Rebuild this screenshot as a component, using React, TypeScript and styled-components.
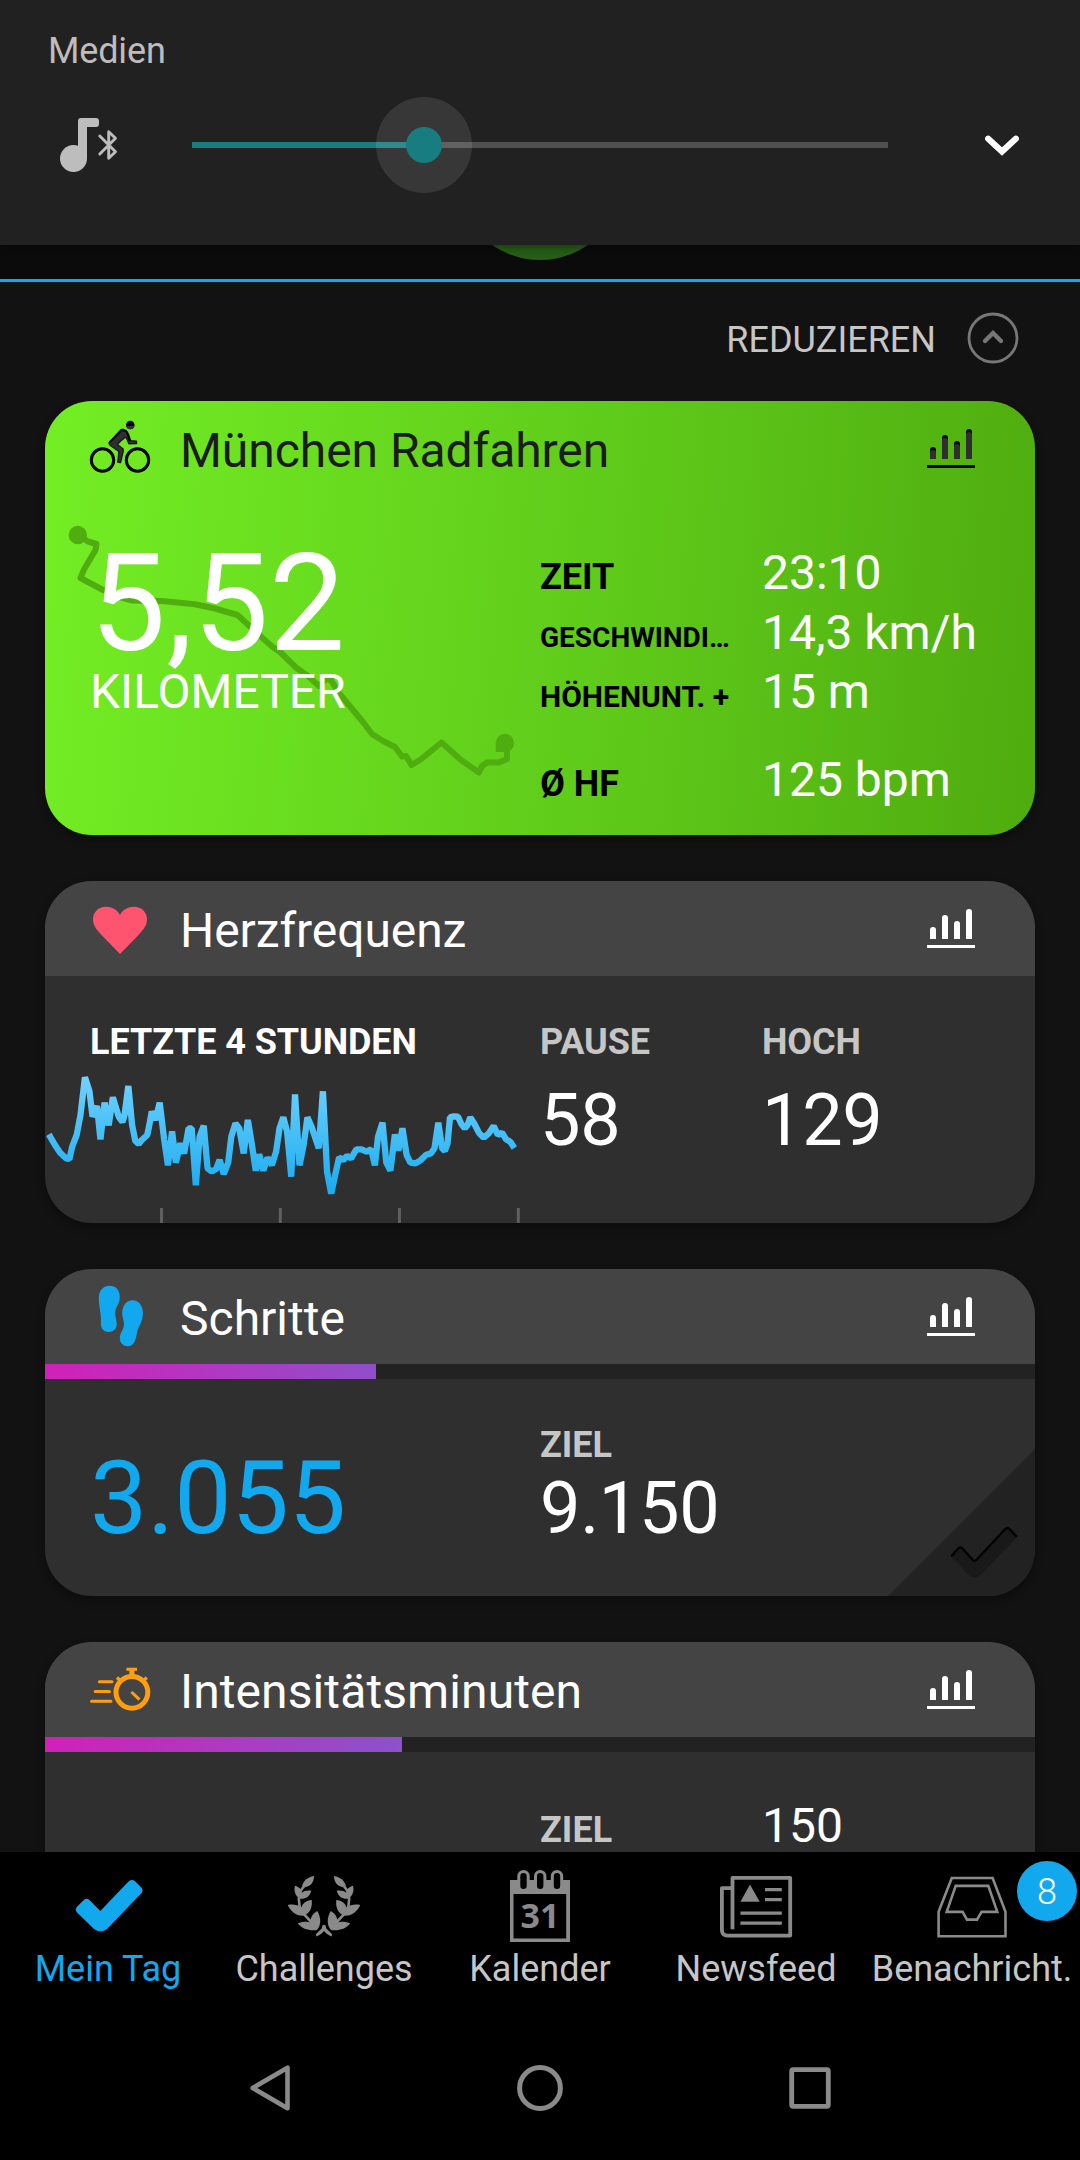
import React from "react";
import styled, { createGlobalStyle, css } from "styled-components";

const BLUE = "#12a8ee";
const GREY = "#8a8a8a";
const LABEL = "#c6c6c6";

const GlobalStyle = createGlobalStyle`
  * { box-sizing: border-box; }
  body { margin: 0; background: #000; }
`;

const Screen = styled.div`
  width: 1080px;
  height: 2160px;
  display: flex;
  flex-direction: column;
  overflow: hidden;
  background: #121212;
  color: #fff;
  font-family: Roboto, "Noto Sans", sans-serif;
  svg { display: block; flex: none; overflow: visible; }
`;

/* ---------- volume panel ---------- */

const VolumePanel = styled.section`
  position: relative;
  z-index: 1;
  flex: none;
  height: 245px;
  padding: 30px 60px 0 48px;
  background: #212121;
  box-shadow: 0 2px 8px rgba(0, 0, 0, 0.4);
`;

const VolumeTitle = styled.div`
  font-size: 36px;
  line-height: 42px;
  letter-spacing: -0.15px;
  color: #bdbdbd;
`;

const VolumeRow = styled.div`
  display: flex;
  align-items: center;
  height: 96px;
  margin-top: 25px;
  padding-left: 12px;
`;

const Slider = styled.div`
  display: flex;
  align-items: center;
  width: 696px;
  height: 96px;
  margin: 0 97px 0 75px;
`;

const Track = styled.div`
  position: relative;
  width: 100%;
  height: 6px;
  background: #505050;
`;

const TrackFill = styled.div`
  height: 6px;
  background: #177d80;
`;

const Halo = styled.div`
  position: absolute;
  top: 50%;
  width: 96px;
  height: 96px;
  transform: translate(-50%, -50%);
  display: grid;
  place-items: center;
  border-radius: 50%;
  background: rgba(255, 255, 255, 0.1);
`;

const Thumb = styled.div`
  width: 36px;
  height: 36px;
  border-radius: 50%;
  background: #177d80;
`;

/* ---------- list ---------- */

const Strip = styled.div`
  position: relative;
  flex: none;
  height: 37px;
  overflow: hidden;
  background: #0b0b0b;
  border-bottom: 3px solid ${BLUE};
`;

const Avatar = styled.div`
  position: absolute;
  left: 50%;
  bottom: 19px;
  width: 167px;
  height: 167px;
  transform: translateX(-50%);
  border-radius: 50%;
  background: #275d17;
`;

const Collapse = styled.div`
  flex: none;
  display: flex;
  justify-content: flex-end;
  align-items: center;
  gap: 31px;
  height: 119px;
  padding: 0 61px 8px 0;
  font-size: 36px;
  line-height: 42px;
  color: ${LABEL};
`;

const CollapseLabel = styled.span`
  padding-top: 4px;
`;

const Feed = styled.main`
  flex: none;
  display: flex;
  flex-direction: column;
  gap: 46px;
  height: 1451px;
  padding: 0 45px;
  overflow: hidden;
`;

const Card = styled.article<{ $height: number; $green?: boolean }>`
  position: relative;
  flex: none;
  height: ${(p) => p.$height}px;
  overflow: hidden;
  border-radius: 47px;
  background: ${(p) =>
    p.$green ? "linear-gradient(95deg, #73ee24 0%, #61ce1b 51%, #4fac0f 100%)" : "#2f2f2f"};
`;

const Shadow = styled.div`
  flex: none;
  border-radius: 47px;
  box-shadow: 0 4px 9px rgba(0, 0, 0, 0.35);
`;

const CardHeader = styled.header<{ $plain?: boolean }>`
  display: flex;
  align-items: center;
  height: 95px;
  padding: 0 60px 1px 45px;
  background: ${(p) => (p.$plain ? "transparent" : "#444")};
`;

const CardTitle = styled.h2<{ $dark?: boolean; $spacing?: number }>`
  flex: 1;
  margin: 0;
  padding: 5px 0 0 30px;
  font-size: 48px;
  font-weight: 400;
  line-height: 56px;
  letter-spacing: ${(p) => p.$spacing ?? 0}px;
  color: ${(p) => (p.$dark ? "#1c1c1c" : "#fff")};
`;

const Body = styled.div<{ $top: number }>`
  position: relative;
  display: grid;
  grid-template-columns: 450px 222px 1fr;
  padding: ${(p) => p.$top}px 0 0 45px;
`;

const DistanceBody = styled(Body)`
  grid-template-columns: 450px 1fr;
`;

const Distance = styled.div`
  padding-top: 1px;
  font-size: 135px;
  line-height: 120px;
  letter-spacing: 0.3px;
`;

const Unit = styled.div`
  font-size: 48px;
  line-height: 56px;
`;

const StatRow = styled.div<{ $gap?: number }>`
  display: grid;
  grid-template-columns: 222px 1fr;
  align-items: end;
  height: 60px;
  margin-top: ${(p) => p.$gap ?? 0}px;
`;

const StatLabel = styled.div<{ $size?: number; $line?: number; $muted?: boolean }>`
  font-size: ${(p) => p.$size ?? 36}px;
  line-height: ${(p) => p.$line ?? 52}px;
  font-weight: 700;
  white-space: nowrap;
  color: ${(p) => (p.$muted ? LABEL : "#000")};
`;

const StatValue = styled.div`
  font-size: 48px;
  line-height: 60px;
  white-space: nowrap;
`;

const Caption = styled.div<{ $bright?: boolean }>`
  font-size: 36px;
  font-weight: 700;
  line-height: 42px;
  letter-spacing: -0.07px;
  white-space: nowrap;
  color: ${(p) => (p.$bright ? "#fff" : LABEL)};
`;

const BigValue = styled.div<{ $gap?: number }>`
  margin-top: ${(p) => p.$gap ?? 0}px;
  font-size: 72px;
  line-height: 84px;
  letter-spacing: -0.3px;
`;

const StepCount = styled.div`
  padding-top: 14px;
  font-size: 102px;
  line-height: 120px;
  color: ${BLUE};
`;

const Progress = styled.div`
  height: 15px;
  background: #222;
`;

const ProgressFill = styled.div`
  height: 15px;
  background: linear-gradient(90deg, #d120b8, #11aaee) 0 0 / 990px 15px no-repeat;
`;

const overlay = css`
  position: absolute;
  pointer-events: none;
`;

const RouteSvg = styled.svg`
  ${overlay}
  left: 0;
  top: 0;
`;

const PulseSvg = styled.svg`
  ${overlay}
  left: 0;
  bottom: 0;
`;

const GoalCorner = styled.svg`
  ${overlay}
  right: 0;
  bottom: 0;
`;

/* ---------- bottom bars ---------- */

const TabBar = styled.nav`
  flex: none;
  display: grid;
  grid-template-columns: repeat(5, 216px);
  height: 164px;
  background: #000;
`;

const Tab = styled.div<{ $active?: boolean }>`
  position: relative;
  display: flex;
  flex-direction: column;
  align-items: center;
  gap: 6px;
  padding-top: 18px;
  font-size: 36px;
  line-height: 42px;
  white-space: nowrap;
  color: ${(p) => (p.$active ? BLUE : LABEL)};
`;

const Badge = styled.span`
  position: absolute;
  top: 9px;
  right: 3px;
  width: 60px;
  height: 60px;
  border-radius: 50%;
  background: ${BLUE};
  color: #fff;
  font-size: 36px;
  font-weight: 300;
  line-height: 62px;
  text-align: center;
`;

const SystemBar = styled.div`
  flex: none;
  display: grid;
  grid-template-columns: repeat(3, 270px);
  justify-content: center;
  justify-items: center;
  align-items: center;
  height: 144px;
  background: #000;
`;

/* ---------- icons ---------- */

const MusicBluetooth = () => (
  <svg width="57" height="54" viewBox="60 118 57 54">
    <circle cx="73.5" cy="158.5" r="13.5" fill="#bdbdbd" />
    <path d="M78 158V121a3 3 0 0 1 3-3H96a3 3 0 0 1 3 3v3a3 3 0 0 1-3 3H87v31.500Z" fill="#bdbdbd" />
    <path
      d="M99.800 136 115.500 151.700 108.700 158.300V131.700L115.500 138.300 99.800 154"
      fill="none"
      stroke="#bdbdbd"
      strokeWidth="2.900"
      strokeLinecap="round"
      strokeLinejoin="round"
    />
  </svg>
);

const ChevronDown = () => (
  <svg width="34" height="20" viewBox="0 0 34 20">
    <path d="M3.200 3.700 17 16.500 30.800 3.700" fill="none" stroke="#fff" strokeWidth="6.200" strokeLinecap="round" />
  </svg>
);

const CollapseIcon = () => (
  <svg width="52" height="52" viewBox="0 0 52 52">
    <circle cx="26" cy="26" r="24" fill="none" stroke="#777" strokeWidth="2.800" />
    <path d="M18 29 26 21 34 29" fill="none" stroke="#777" strokeWidth="4.400" strokeLinecap="round" />
  </svg>
);

const bars = [
  [3, 18],
  [15, 6],
  [27, 12],
  [39, 0],
];

const BarsIcon = ({ dark }: { dark?: boolean }) => (
  <svg width="48" height="39" viewBox="0 0 48 39">
    {bars.map(([x, y]) => (
      <g key={x}>
        <path d={`M${x} 30V${y + 3}a3 3 0 0 1 6 0V30Z`} fill={dark ? "#000" : "#fff"} />
        {dark && <path d={`M${x} 30V${y + 6}a3 3 0 0 1 6 0V30Z`} fill="#2f2f2f" />}
      </g>
    ))}
    <rect y="36" width="48" height="3" fill={dark ? "#000" : "#fff"} />
  </svg>
);

const BikeIcon = () => (
  <svg width="60" height="60" viewBox="0 0 60 60">
    <g fill="none" stroke="#000" strokeWidth="3">
      <circle cx="12.500" cy="42" r="11.200" />
      <circle cx="47.500" cy="42" r="11.200" />
    </g>
    <circle cx="40.300" cy="7" r="4.300" fill="#000" />
    <path d="M36.200 8a4.200 4.200 0 0 0 8.200 0Z" fill="#333" />
    <path
      d="M33.300 11.300 35.700 12.300 38.300 15.700 40.700 22.700 46.500 23.100V25.600L38.900 25.700 36.300 19.600 35 19.500 30.700 23 27.300 26.500 33 30.700 33.300 33 30.500 44.600 27.800 44 28.900 33.500 20 27.300 18.900 25 30.900 11.800Z"
      fill="#2f2f2f"
      stroke="#1a1a1a"
      strokeWidth="1.400"
      strokeLinejoin="round"
    />
    <path d="M19.500 24.500 32 11.800 36.500 13.500 40 23" fill="none" stroke="#000" strokeWidth="1.800" strokeLinejoin="round" />
  </svg>
);

const HeartIcon = () => (
  <svg width="60" height="60" viewBox="0 0 60 60">
    <path
      d="M30 56 11.500 37C6 31 3 27 3 21.500 3 14 8.500 8.800 16 8.800 22 8.800 27 11.500 30 17 33 11.500 38 8.800 44 8.800 51.500 8.800 57 14 57 21.500 57 27 54 31 48.500 37Z"
      fill="#ff5470"
    />
  </svg>
);

const FeetIcon = () => (
  <svg width="60" height="60" viewBox="0 0 60 60" fill={BLUE}>
    <path d="M19.500-.300C26-.300 29.800 4.300 29.800 10.500 29.800 19 25.200 20 25.200 27.500 25.200 32 26.700 33 26.700 38 26.700 42.800 23.300 46 18.800 46 14.200 46 10.900 42.800 10.900 38.500V33C10.900 26 8.800 20.500 8.800 12 8.800 5 13-.300 19.500-.300Z" />
    <path d="M42.600 14.200C48.500 14.200 52.900 19.500 52.900 27 52.900 35.500 48.300 40.500 47 46.500 45.600 54.500 44 60.200 37.800 60.200 33.500 60.200 29.800 57 29.800 52.500 29.800 46 34 44.500 34 38 34 34 32.200 32 32.200 27 32.200 19.500 36.500 14.200 42.600 14.200Z" />
  </svg>
);

const StopwatchIcon = () => (
  <svg width="60" height="60" viewBox="0 0 60 60" fill="none" stroke="#ff9e0f">
    <circle cx="41.900" cy="33.300" r="15.900" strokeWidth="5" />
    <path d="M36.400 10.300H47" strokeWidth="2.900" />
    <path d="M41.900 10V17" strokeWidth="5" />
    <path d="M27 18.500 31 22.500M56.800 18.500 52.800 22.500" strokeWidth="3.200" />
    <path d="M41.500 33 49.500 40.700" strokeWidth="3" />
    <path d="M9.300 22.700H22M5.200 32.400H19.500M1.500 42.300H21" strokeWidth="3" strokeLinecap="round" />
  </svg>
);

const CheckIcon = () => (
  <svg width="72" height="72" viewBox="0 0 72 72">
    <path
      d="M5 42.500Q2.500 39.500 5 36.700L12 29.700Q14.500 27.700 17 29.500L28.300 41 56.500 11.400Q60 8.500 63.300 11.400L69.300 17.400Q71.800 20.300 69.300 23.300L35 59Q28.500 63.500 22 59Z"
      fill={BLUE}
    />
  </svg>
);

const laurelHalf = (
  <>
    <path d="M26 6C20 7.500 15.500 10 14.300 15.500L16 17.500C21.500 16.500 26 13.500 26 6Z" />
    <path d="M7 15.700C11.500 17 13.500 19.500 13.800 22.800 16.500 20.500 19.500 20 23.300 20.700 21.500 27 17.500 29.300 11.500 28.700 7 25 5.700 21 7 15.700Z" />
    <path d="M-.300 35C5 34 10 35 13.500 37.200 15 33 18 30.500 23.700 30 24.500 37 22.500 42 17 45.500 8.500 46.500 3.500 42.500-.300 35Z" />
    <path d="M9.700 53.300C14 51.300 19 51.300 22.300 52.300 22.500 47 25 43.500 29.300 41 33.300 48 33.300 55 29 60 22 61 14.500 59.500 9.700 53.300Z" />
    <path d="M16 16 12.500 21 10.800 29 12 40 26 55" fill="none" stroke={GREY} strokeWidth="2.600" />
  </>
);

const LaurelIcon = () => (
  <svg width="72" height="72" viewBox="0 0 72 72" fill={GREY}>
    {laurelHalf}
    <g transform="matrix(-1 0 0 1 72 0)">{laurelHalf}</g>
    <path d="M34.700 55H37.300L38.300 58.500 44 64 43.700 66.500C40.500 65.500 38 63.500 36 61 34 63.500 31.500 65.500 28.300 66.500L28 64 33.700 58.500Z" />
  </svg>
);

const CalendarIcon = () => (
  <svg width="72" height="72" viewBox="0 0 72 72">
    <path d="M6 10H66V72H6ZM9.500 24V68.500H62.200V24Z" fill={GREY} fillRule="evenodd" />
    {[19.5, 36.2, 53].map((x) => (
      <rect key={x} x={x - 4.7} y="1.500" width="9.400" height="19" rx="4.700" fill="#000" stroke={GREY} strokeWidth="3" />
    ))}
    <text
      x="36"
      y="58"
      textAnchor="middle"
      fontFamily="'Open Sans', 'Noto Sans', sans-serif"
      fontSize="34"
      fontWeight="700"
      fill={GREY}
    >
      31
    </text>
  </svg>
);

const NewsIcon = () => (
  <svg width="72" height="72" viewBox="0 0 72 72">
    <path
      d="M12.500 59.300V7.800H70.200V65.600H7.500Q1.900 65.600 1.900 60V18.100H12.500"
      fill="none"
      stroke={GREY}
      strokeWidth="3.800"
      strokeLinejoin="round"
    />
    <path d="M30 14.500 20.400 31.700H39.700Z" fill={GREY} />
    <path d="M45 19.700H61.800M45 29.700H61.800M20.400 43.200H61.800M20.400 53.200H61.800" stroke={GREY} strokeWidth="3.200" />
  </svg>
);

const InboxIcon = () => (
  <svg width="72" height="72" viewBox="0 0 72 72" fill="none" stroke={GREY}>
    <path d="M15.800 8H56.600L69.500 41.700V66.200H2.600V41.700Z" strokeWidth="2.600" />
    <path d="M19.700 15.900H52.300L61.300 41.900H45.600L41 49.600H31L26.600 41.900H10.700Z" strokeWidth="2.600" />
  </svg>
);

const GoalCheck = () => (
  <GoalCorner width="147" height="147" viewBox="888 1449 147 147">
    <path d="M1035 1449V1596H888Z" fill="#222" />
    <path
      d="M951 1556 960 1546.500 974.500 1561 1007.500 1527.500 1017 1537 981 1574.500Q974.500 1580 968 1574.500Z"
      fill="#191919"
    />
    <path
      d="M951.300 1556.300 958.500 1548.300Q960.300 1546.300 962.300 1548.300L972.500 1559.800Q974.500 1561.800 976.500 1559.800L1005.300 1529Q1007.500 1527 1009.500 1529L1016.700 1536.700"
      fill="none"
      stroke="#000"
      strokeWidth="2.200"
    />
  </GoalCorner>
);

const Route = () => (
  <RouteSvg width="990" height="434" viewBox="45 401 990 434">
    <g fill="#50ad10">
      <circle cx="77.800" cy="535" r="9.200" />
      <circle cx="504.900" cy="743" r="9.200" />
      <rect x="495.700" y="743" width="9" height="9" />
    </g>
    <path
      d="M78 535 88 541.500 96.500 544 95.500 550 84 569.500 80.500 578 103 590 118 596.500 132 600.500 162 601 195 604.300 215 608.500 237.500 615 251 627.500 272 646.500 280 652 296 667.500 308 676 319 686 326 679 331 680 338 692 363 722 372 734 383 741 395 747 402 756.500 406 756 411.500 765 420 760 441.500 742.500 461 760 479 772.500 482 766 487 762.500 499 762.500 507 759V743"
      fill="none"
      stroke="#50ad10"
      strokeWidth="6"
      strokeLinejoin="round"
    />
  </RouteSvg>
);

const pulse =
  "142,793 160,825 175,848 192,865 202,867 210,830 223,795 234,735 247,622 260,664 269,740 282,708 292,808 304,698 316,766 328,682 345,740 356,756 362,735 373,648 384,765 393,812 403,822 412,810 428,795 434,765 441,725 452,750 464,698 477,808 488,886 500,784 511,878 524,820 535,850 548,775 557,775 569,946 580,800 592,767 603,895 615,905 628,897 638,870 650,912 663,878 672,800 684,760 695,775 708,850 720,750 732,825 743,902 753,853 765,902 777,863 790,885 802,845 812,775 823,742 834,785 846,920 857,673 870,886 882,825 893,742 905,770 926,835 938,664 950,905 962,971 973,918 985,862 997,870 1008,858 1020,865 1035,838 1050,838 1065,845 1078,838 1089,886 1098,800 1111,758 1122,878 1134,902 1147,793 1157,842 1169,775 1181,855 1192,878 1207,880 1220,872 1237,855 1252,850 1262,835 1273,758 1284,835 1292,843 1300,820 1307,742 1318,739 1330,740 1340,762 1350,775 1358,765 1366,742 1378,762 1392,790 1405,803 1420,790 1434,768 1446,795 1458,788 1470,808 1482,815 1494,834";

const Pulse = () => (
  <PulseSvg width="478" height="153" viewBox="131 600 1388 459" preserveAspectRatio="none">
    <defs>
      <linearGradient id="pulse" gradientUnits="userSpaceOnUse" x1="0" y1="620" x2="0" y2="970">
        <stop offset="0" stopColor="#70d2ff" />
        <stop offset="1" stopColor="#1aabee" />
      </linearGradient>
    </defs>
    {[465, 810, 1156, 1501].map((x) => (
      <rect key={x} x={x} y="1014" width="8.700" height="45" fill="#606060" />
    ))}
    <polyline
      points={pulse}
      fill="none"
      stroke="url(#pulse)"
      strokeWidth="6.300"
      strokeLinejoin="bevel"
      vectorEffect="non-scaling-stroke"
    />
  </PulseSvg>
);

/* ---------- page ---------- */

const tabs = [
  { name: "Mein Tag", icon: <CheckIcon />, active: true },
  { name: "Challenges", icon: <LaurelIcon /> },
  { name: "Kalender", icon: <CalendarIcon /> },
  { name: "Newsfeed", icon: <NewsIcon /> },
  { name: "Benachricht.", icon: <InboxIcon />, badge: 8 },
];

const volume = 1 / 3;

const GoalBar = ({ value }: { value: number }) => (
  <Progress>
    <ProgressFill style={{ width: `${value * 100}%` }} />
  </Progress>
);

export default function App() {
  return (
    <Screen>
      <GlobalStyle />
      <VolumePanel>
        <VolumeTitle>Medien</VolumeTitle>
        <VolumeRow>
          <MusicBluetooth />
          <Slider>
            <Track>
              <Halo style={{ left: `${volume * 100}%` }}>
                <Thumb />
              </Halo>
              <TrackFill style={{ width: `${volume * 100}%` }} />
            </Track>
          </Slider>
          <ChevronDown />
        </VolumeRow>
      </VolumePanel>

      <Strip>
        <Avatar />
      </Strip>
      <Collapse>
        <CollapseLabel>REDUZIEREN</CollapseLabel>
        <CollapseIcon />
      </Collapse>

      <Feed>
        <Shadow>
          <Card $height={434} $green>
            <Route />
            <CardHeader $plain>
              <BikeIcon />
              <CardTitle $dark $spacing={-0.05}>München Radfahren</CardTitle>
              <BarsIcon dark />
            </CardHeader>
            <DistanceBody $top={47}>
              <div>
                <Distance>5,52</Distance>
                <Unit>KILOMETER</Unit>
              </div>
              <div>
                <StatRow>
                  <StatLabel>ZEIT</StatLabel>
                  <StatValue>23:10</StatValue>
                </StatRow>
                <StatRow>
                  <StatLabel $size={28} $line={50}>GESCHWINDI…</StatLabel>
                  <StatValue>14,3 km/h</StatValue>
                </StatRow>
                <StatRow $gap={-1}>
                  <StatLabel $size={30} $line={50}>HÖHENUNT. +</StatLabel>
                  <StatValue>15 m</StatValue>
                </StatRow>
                <StatRow $gap={28}>
                  <StatLabel>Ø HF</StatLabel>
                  <StatValue>125 bpm</StatValue>
                </StatRow>
              </div>
            </DistanceBody>
          </Card>
        </Shadow>

        <Shadow>
          <Card $height={342}>
            <CardHeader>
              <HeartIcon />
              <CardTitle $spacing={-0.08}>Herzfrequenz</CardTitle>
              <BarsIcon />
            </CardHeader>
            <Body $top={45}>
              <Caption $bright>LETZTE 4 STUNDEN</Caption>
              <div>
                <Caption>PAUSE</Caption>
                <BigValue $gap={16}>58</BigValue>
              </div>
              <div>
                <Caption>HOCH</Caption>
                <BigValue $gap={16}>129</BigValue>
              </div>
            </Body>
            <Pulse />
          </Card>
        </Shadow>

        <Shadow>
          <Card $height={327}>
            <CardHeader>
              <FeetIcon />
              <CardTitle>Schritte</CardTitle>
              <BarsIcon />
            </CardHeader>
            <GoalBar value={3055 / 9150} />
            <Body $top={45}>
              <StepCount>3.055</StepCount>
              <div>
                <Caption>ZIEL</Caption>
                <BigValue $gap={1}>9.150</BigValue>
              </div>
            </Body>
            <GoalCheck />
          </Card>
        </Shadow>

        <Shadow>
          <Card $height={327}>
            <CardHeader>
              <StopwatchIcon />
              <CardTitle $spacing={0.1}>Intensitätsminuten</CardTitle>
              <BarsIcon />
            </CardHeader>
            <GoalBar value={0.3606} />
            <Body $top={44}>
              <div />
              <StatLabel $muted $line={68}>ZIEL</StatLabel>
              <StatValue>150</StatValue>
            </Body>
          </Card>
        </Shadow>
      </Feed>

      <TabBar>
        {tabs.map((tab) => (
          <Tab key={tab.name} $active={tab.active}>
            {tab.icon}
            {tab.name}
            {tab.badge && <Badge>{tab.badge}</Badge>}
          </Tab>
        ))}
      </TabBar>

      <SystemBar>
        <svg width="40" height="46" viewBox="0 0 40 46">
          <path d="M37.500 2.700V43.300L2.700 23Z" fill="none" stroke={GREY} strokeWidth="4.600" strokeLinejoin="round" />
        </svg>
        <svg width="46" height="46" viewBox="0 0 46 46">
          <circle cx="23" cy="23" r="20.400" fill="none" stroke={GREY} strokeWidth="5" />
        </svg>
        <svg width="42" height="42" viewBox="0 0 42 42">
          <rect x="2.700" y="2.700" width="36.600" height="36.600" rx="1.500" fill="none" stroke={GREY} strokeWidth="4.800" />
        </svg>
      </SystemBar>
    </Screen>
  );
}
